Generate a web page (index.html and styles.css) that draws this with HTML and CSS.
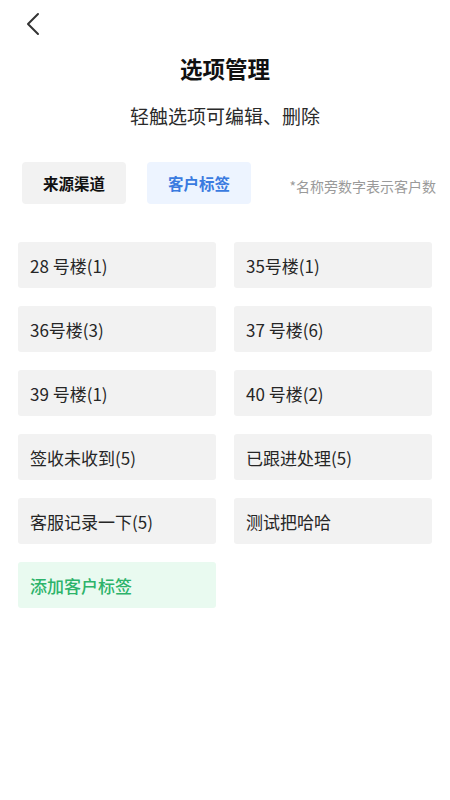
FILE: index.html
```html
<!DOCTYPE html>
<html lang="zh">
<head>
<meta charset="utf-8">
<link rel="stylesheet" href="styles.css">
</head>
<body>
<div class="page">
  <div class="topbar">
    <svg class="back" width="20" height="24" viewBox="0 0 20 24"><path d="M13 2 L3 12 L13 22" fill="none" stroke="#333" stroke-width="2" stroke-linecap="round" stroke-linejoin="round"/></svg>
  </div>
  <h1 class="title">选项管理</h1>
  <p class="subtitle">轻触选项可编辑、删除</p>
  <div class="tabs">
    <div class="tab">来源渠道</div>
    <div class="tab active">客户标签</div>
    <div class="note">*名称旁数字表示客户数</div>
  </div>
  <div class="grid">
    <div class="item">28 号楼(1)</div>
    <div class="item">35号楼(1)</div>
    <div class="item">36号楼(3)</div>
    <div class="item">37 号楼(6)</div>
    <div class="item">39 号楼(1)</div>
    <div class="item">40 号楼(2)</div>
    <div class="item">签收未收到(5)</div>
    <div class="item">已跟进处理(5)</div>
    <div class="item">客服记录一下(5)</div>
    <div class="item">测试把哈哈</div>
    <div class="item add">添加客户标签</div>
  </div>
</div>
</body>
</html>
```
FILE: styles.css
```css
* { box-sizing: border-box; }
html, body {
  margin: 0;
  padding: 0;
  background: #ffffff;
  font-family: "Noto Sans CJK SC", "Noto Sans", sans-serif;
  color: #333;
}
.page {
  width: 450px;
  min-height: 800px;
}
.topbar {
  height: 46px;
  padding: 12px 0 0 25px;
}
.back { display: block; }
.title {
  margin: 6px 0 0;
  text-align: center;
  font-size: 22.5px;
  font-weight: 700;
  color: #111;
  line-height: 32px;
}
.subtitle {
  margin: 18px 0 0;
  text-align: center;
  font-size: 19px;
  color: #2a2a2a;
  line-height: 28px;
}
.tabs {
  display: flex;
  align-items: center;
  margin-top: 32px;
  padding: 0 14px 0 22px;
}
.tab {
  width: 104px;
  height: 42px;
  border-radius: 4px;
  background: #f2f2f2;
  display: flex;
  align-items: center;
  justify-content: center;
  font-size: 15.5px;
  font-weight: 700;
  color: #111;
  margin-right: 21px;
}
.tab.active {
  background: #edf4ff;
  color: #3a7be0;
}
.note {
  margin-left: auto;
  font-size: 14px;
  color: #9a9a9a;
  padding-top: 6px;
}
.grid {
  display: grid;
  grid-template-columns: 198px 198px;
  column-gap: 18px;
  row-gap: 18px;
  padding: 0 18px;
  margin-top: 38px;
}
.item {
  height: 46px;
  background: #f2f2f2;
  border-radius: 3px;
  display: flex;
  align-items: center;
  padding-left: 12px;
  font-size: 17px;
  color: #262626;
}
.item.add {
  background: #e9faf0;
  color: #2db36a;
  font-weight: 500;
}
```
